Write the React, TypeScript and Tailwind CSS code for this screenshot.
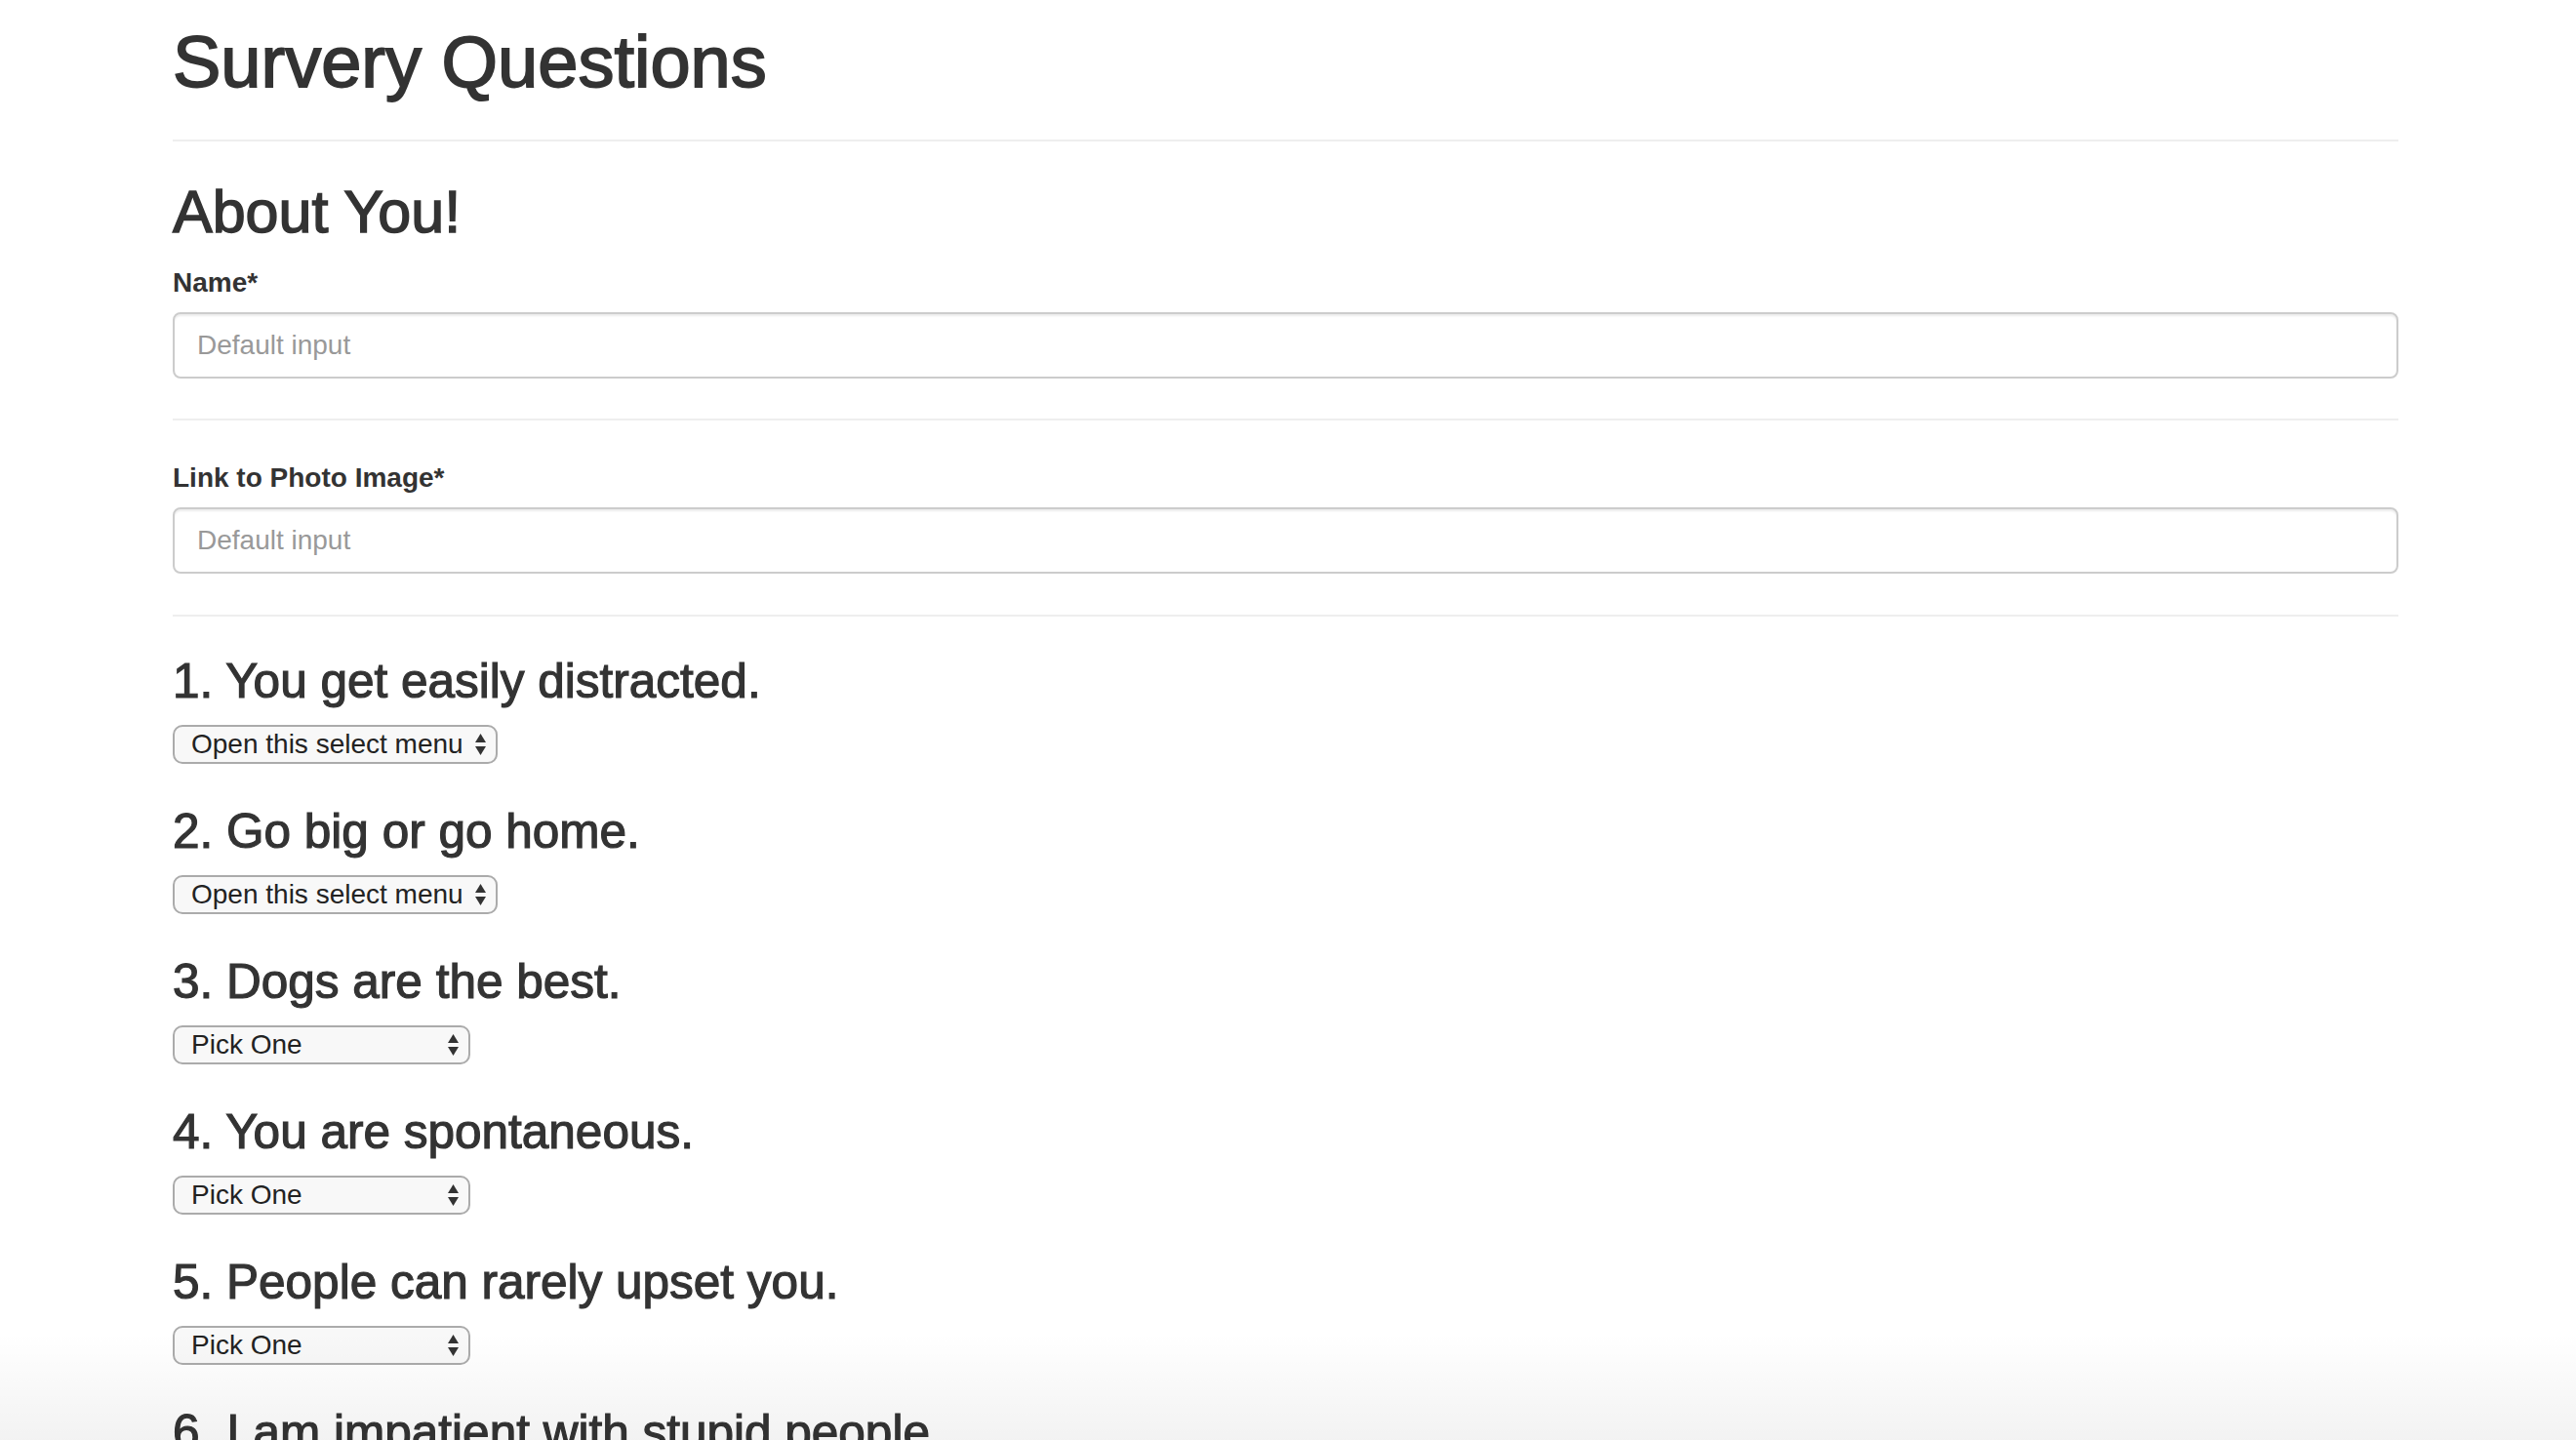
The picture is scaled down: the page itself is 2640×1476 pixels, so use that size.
import React from 'react';

const questions = [
  { text: '1. You get easily distracted.', placeholder: 'Open this select menu', width: 'w-[333px]' },
  { text: '2. Go big or go home.', placeholder: 'Open this select menu', width: 'w-[333px]' },
  { text: '3. Dogs are the best.', placeholder: 'Pick One', width: 'w-[305px]' },
  { text: '4. You are spontaneous.', placeholder: 'Pick One', width: 'w-[305px]' },
  { text: '5. People can rarely upset you.', placeholder: 'Pick One', width: 'w-[305px]' },
  { text: '6. I am impatient with stupid people.', placeholder: 'Pick One', width: 'w-[305px]' },
];

const SelectArrows = () => (
  <svg width="11" height="22" viewBox="0 0 11 22" className="pointer-events-none absolute right-[12px] top-1/2 -translate-y-1/2">
    <polygon points="0,9 5.5,0 11,9" fill="#333" />
    <polygon points="0,13 11,13 5.5,22" fill="#333" />
  </svg>
);

const FakeSelect: React.FC<{ label: string; width: string }> = ({ label, width }) => (
  <div className={`relative mt-[19px] ${width}`}>
    <select
      defaultValue=""
      className="h-[40px] w-full appearance-none rounded-[10px] border-2 border-[#ababab] bg-[#f8f8f8] pl-[17px] pr-[30px] text-[28px] leading-[36px] text-[#222] outline-none"
    >
      <option value="">{label}</option>
      <option value="1">1 (Strongly Disagree)</option>
      <option value="2">2</option>
      <option value="3">3</option>
      <option value="4">4</option>
      <option value="5">5 (Strongly Agree)</option>
    </select>
    <SelectArrows />
  </div>
);

const TextField: React.FC<{ label: string }> = ({ label }) => (
  <div>
    <label className="block text-[28px] font-bold leading-[40px]">{label}</label>
    <input
      type="text"
      placeholder="Default input"
      className="mt-[10px] block h-[68px] w-full rounded-[8px] border-2 border-[#ccc] bg-white px-[23px] text-[28px] text-[#555] shadow-[inset_0_2px_2px_rgba(0,0,0,0.075)] outline-none placeholder:text-[#999]"
    />
  </div>
);

export default function App() {
  return (
    <div className="relative h-[1476px] overflow-hidden bg-white font-['Liberation_Sans',Arial,sans-serif] text-[#333]">
      <div className="ml-[177px] w-[2281px]">
        {/* Header */}
        <h1 className="pt-[24px] text-[74px] leading-[80px] [-webkit-text-stroke:1.8px_#333]">Survery Questions</h1>
        <hr className="mt-[39px] border-t-2 border-[#eee]" />

        {/* About you */}
        <h2 className="mt-[39px] text-[61px] leading-[66px] [-webkit-text-stroke:1.5px_#333]">About You!</h2>
        <div className="mt-[20px]">
          <TextField label="Name*" />
        </div>
        <hr className="mt-[41px] border-t-2 border-[#eee]" />
        <div className="mt-[39px]">
          <TextField label="Link to Photo Image*" />
        </div>
        <hr className="mt-[42px] border-t-2 border-[#eee]" />

        {/* Questions */}
        <div className="mt-[39px]">
          {questions.map((q, i) => (
            <div key={i} className={i > 0 ? 'mt-[42px]' : ''}>
              <h3 className="text-[49.5px] leading-[53px] [-webkit-text-stroke:1.2px_#333]">{q.text}</h3>
              <FakeSelect label={q.placeholder} width={q.width} />
            </div>
          ))}
        </div>
      </div>

      {/* bottom fade */}
      <div className="pointer-events-none absolute bottom-0 left-0 right-0 h-[110px] bg-gradient-to-b from-transparent to-black/[0.05]" />
    </div>
  );
}
